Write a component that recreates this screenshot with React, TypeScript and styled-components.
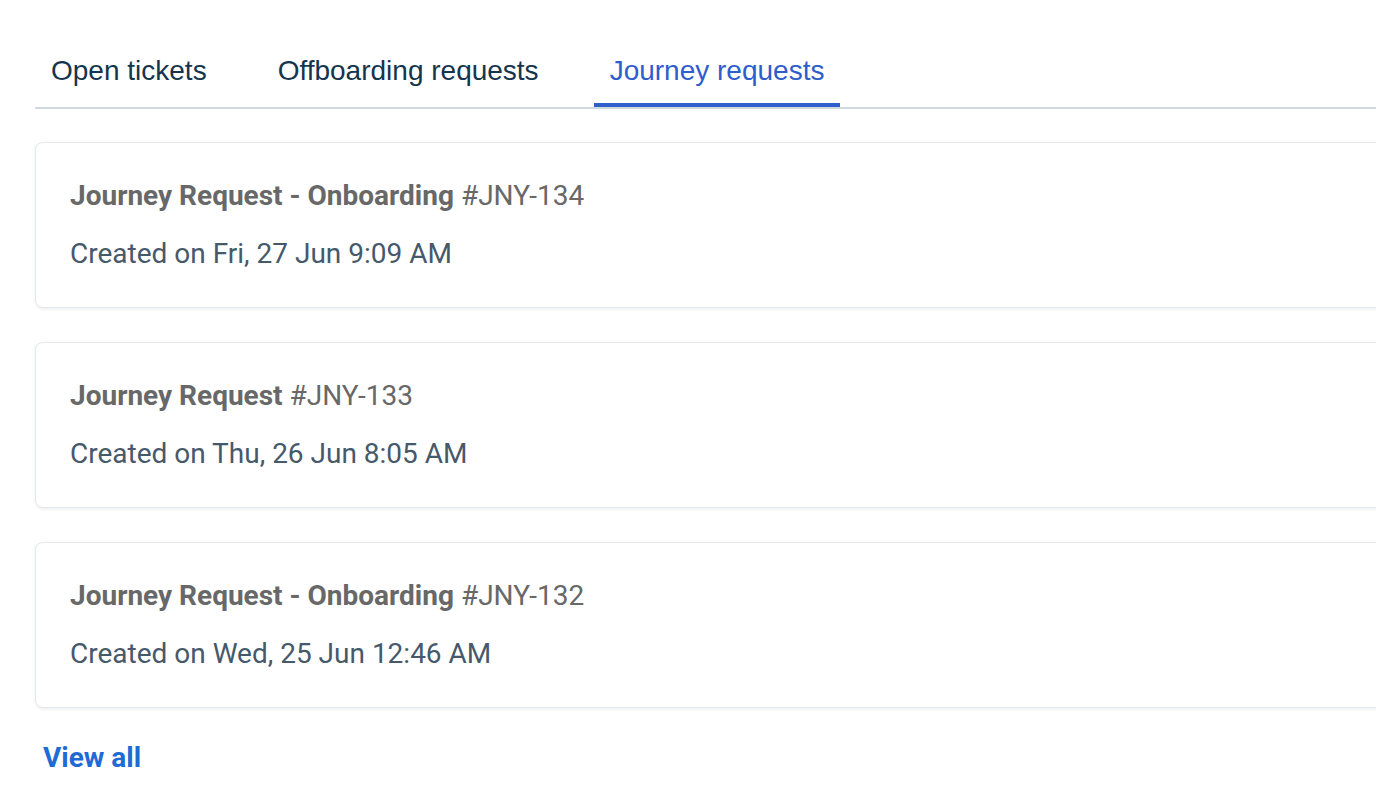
import styled, { createGlobalStyle } from 'styled-components';

interface JourneyRequest {
  title: string;
  code: string;
  createdOn: string;
}

const requests: JourneyRequest[] = [
  { title: 'Journey Request - Onboarding', code: '#JNY-134', createdOn: 'Fri, 27 Jun 9:09 AM' },
  { title: 'Journey Request', code: '#JNY-133', createdOn: 'Thu, 26 Jun 8:05 AM' },
  { title: 'Journey Request - Onboarding', code: '#JNY-132', createdOn: 'Wed, 25 Jun 12:46 AM' },
];

const tabs = ['Open tickets', 'Offboarding requests', 'Journey requests'];

const GlobalStyle = createGlobalStyle`
  html, body {
    margin: 0;
    padding: 0;
    background: #ffffff;
    overflow: hidden;
  }
`;

const Page = styled.div`
  width: 1420px;
  padding: 35px 0 0 35px;
  font-family: Roboto, "Liberation Sans", Arial, sans-serif;
`;

const TabBar = styled.div`
  display: flex;
  gap: 39px;
  border-bottom: 2px solid #d0d8e1;
`;

const Tab = styled.button<{ $active?: boolean }>`
  font-family: "Liberation Sans", Arial, sans-serif;
  font-size: 28px;
  line-height: 32px;
  padding: 20px 16px 16px;
  margin: 0;
  background: none;
  border: none;
  border-bottom: 4px solid ${(p) => (p.$active ? '#2e5dcc' : 'transparent')};
  color: ${(p) => (p.$active ? '#2e5dcc' : '#15344e')};
  cursor: pointer;
`;

const CardList = styled.div`
  display: flex;
  flex-direction: column;
  gap: 34px;
  margin-top: 33px;
`;

const Card = styled.div`
  border: 1px solid #e6e9ee;
  border-radius: 8px;
  box-shadow: 0 1px 3px rgba(40, 60, 90, 0.1);
  padding: 37px 34px 37px;
  display: flex;
  flex-direction: column;
  gap: 26px;
  background: #ffffff;
`;

const Title = styled.div`
  font-size: 28px;
  line-height: 32px;
  color: #686868;
`;

const TitleStrong = styled.span`
  font-weight: 700;
`;

const Created = styled.div`
  font-size: 28px;
  line-height: 32px;
  color: #46596b;
`;

const ViewAll = styled.a`
  display: block;
  margin: 34px 0 0 8px;
  font-size: 28px;
  line-height: 32px;
  font-weight: 700;
  color: #1f6bd3;
  text-decoration: none;
  cursor: pointer;
`;

export default function App() {
  return (
    <>
      <GlobalStyle />
      <Page>
        <TabBar>
          {tabs.map((t) => (
            <Tab key={t} $active={t === 'Journey requests'}>
              {t}
            </Tab>
          ))}
        </TabBar>
        <CardList>
          {requests.map((r) => (
            <Card key={r.code}>
              <Title>
                <TitleStrong>{r.title}</TitleStrong> {r.code}
              </Title>
              <Created>Created on {r.createdOn}</Created>
            </Card>
          ))}
        </CardList>
        <ViewAll>View all</ViewAll>
      </Page>
    </>
  );
}
